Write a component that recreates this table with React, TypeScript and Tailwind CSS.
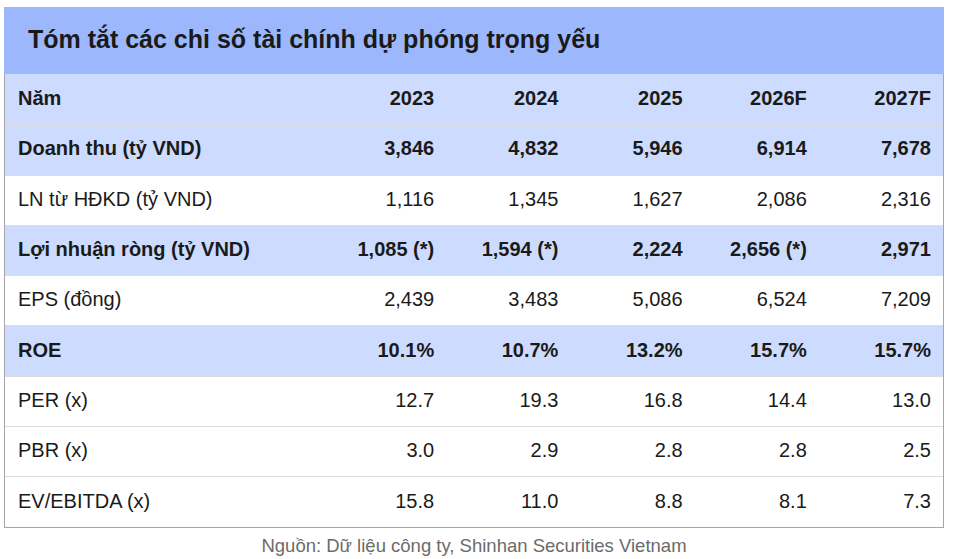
import React from "react";

type Row = { label: string; values: string[]; bold?: boolean };

const rows: Row[] = [
  { label: "Năm", values: ["2023", "2024", "2025", "2026F", "2027F"], bold: true },
  { label: "Doanh thu (tỷ VND)", values: ["3,846", "4,832", "5,946", "6,914", "7,678"], bold: true },
  { label: "LN từ HĐKD (tỷ VND)", values: ["1,116", "1,345", "1,627", "2,086", "2,316"] },
  { label: "Lợi nhuận ròng (tỷ VND)", values: ["1,085 (*)", "1,594 (*)", "2,224", "2,656 (*)", "2,971"], bold: true },
  { label: "EPS (đồng)", values: ["2,439", "3,483", "5,086", "6,524", "7,209"] },
  { label: "ROE", values: ["10.1%", "10.7%", "13.2%", "15.7%", "15.7%"], bold: true },
  { label: "PER (x)", values: ["12.7", "19.3", "16.8", "14.4", "13.0"] },
  { label: "PBR (x)", values: ["3.0", "2.9", "2.8", "2.8", "2.5"] },
  { label: "EV/EBITDA (x)", values: ["15.8", "11.0", "8.8", "8.1", "7.3"] },
];

export default function App() {
  return (
    <div
      className="w-[953px] h-[559px] bg-white pt-[7px] pl-[4px]"
      style={{ fontFamily: '"Liberation Sans", Arial, sans-serif' }}
    >
      <div className="w-[940px]">
        <div className="h-[67px] bg-[#9cb7fc] flex items-center pl-[24px] pb-[2px]">
          <span className="text-[25px] font-bold text-[#1a1a1a]">
            Tóm tắt các chi số tài chính dự phóng trọng yếu
          </span>
        </div>
        <div className="border-x border-b border-[#a6a6a6]">
          {rows.map((r, i) => (
            <div
              key={i}
              className={
                "grid grid-cols-[317px_repeat(5,1fr)] h-[50.3px] items-center text-[20px] leading-none text-[#1a1a1a] pb-[3px] " +
                (i > 0 ? "border-t border-[#dcdcdc] " : "") +
                (r.bold ? "bg-[#cddcfe] font-bold" : "bg-white")
              }
            >
              <div className="pl-[13px]">{r.label}</div>
              {r.values.map((v, j) => (
                <div key={j} className="text-right pr-[12px]">
                  {v}
                </div>
              ))}
            </div>
          ))}
        </div>
        <div className="text-center text-[18.5px] leading-none text-[#6b6b6b] mt-[9px]">
          Nguồn: Dữ liệu công ty, Shinhan Securities Vietnam
        </div>
      </div>
    </div>
  );
}
